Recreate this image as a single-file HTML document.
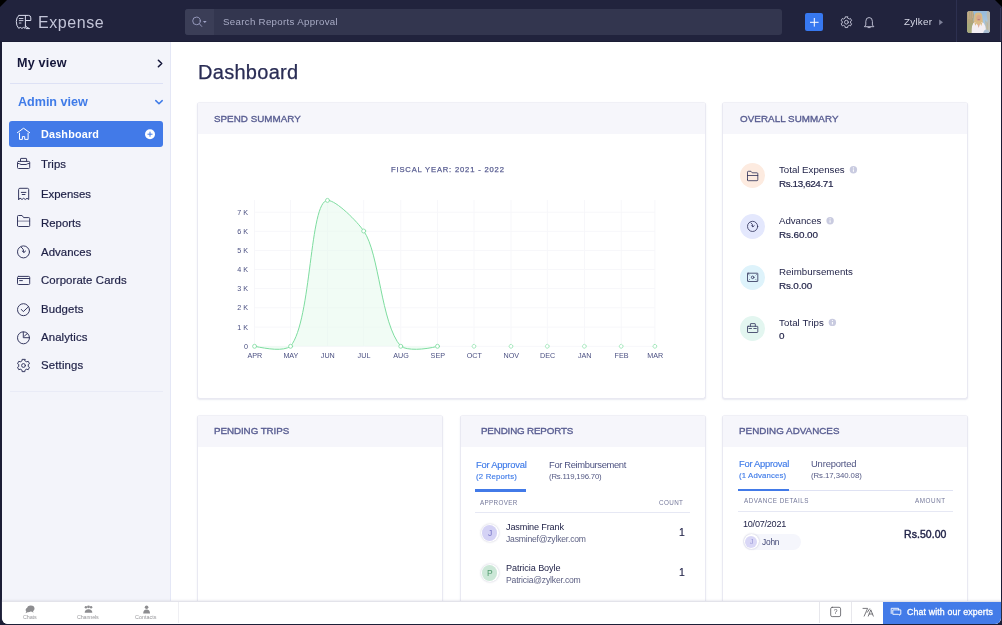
<!DOCTYPE html>
<html>
<head>
<meta charset="utf-8">
<title>Expense</title>
<style>
*{box-sizing:border-box;margin:0;padding:0}
html,body{width:1002px;height:625px;overflow:hidden;background:#1b1d35}
body{font-family:"Liberation Sans",sans-serif;color:#21233d;position:relative}
.a{position:absolute}
.t{position:absolute;white-space:nowrap;line-height:1;will-change:transform}
.card{position:absolute;background:#fff;border:1px solid #e9e9f2;border-top-color:#f0f0f6;border-radius:3px;box-shadow:0 1px 1.5px rgba(190,192,215,.35);overflow:hidden}
.card i{position:absolute;left:0;top:0;right:0;height:30.6px;background:#f6f6fb;display:block}
#gfx{position:absolute;left:0;top:0;will-change:transform}

</style>
</head>
<body>
<div class="a" style="left:0;top:0;width:1002px;height:41.4px;background:#21233d"></div>
<div class="a" style="left:2.2px;top:41.5px;width:998.7px;height:582.1px;background:#fff;border-radius:0 0 6px 6px;overflow:hidden">
</div>
<div class="a" style="left:2.2px;top:41.5px;width:169.2px;height:560.5px;background:#f3f4fa;border-right:1px solid #e4e7f6"></div>
<div class="a" style="left:9.5px;top:83px;width:153.3px;height:1px;background:#dde1f5"></div>
<div class="a" style="left:9.5px;top:391px;width:153.3px;height:1px;background:#e9ebf6"></div>
<div class="a" style="left:9.3px;top:121.4px;width:153.5px;height:25.4px;background:#427ae8;border-radius:3px"></div>
<div class="card" style="left:197px;top:102.4px;width:509px;height:296.3px"><i></i></div>
<div class="card" style="left:721.7px;top:102.4px;width:246.6px;height:296.3px"><i></i></div>
<div class="card" style="left:197px;top:415.3px;width:245.6px;height:200px"><i></i></div>
<div class="card" style="left:459.5px;top:415.3px;width:246.5px;height:200px"><i></i></div>
<div class="card" style="left:721.7px;top:415.3px;width:246.6px;height:200px"><i></i></div>
<div class="a" style="left:740.1px;top:163.3px;width:25.2px;height:25.2px;border-radius:50%;background:#fdebe0"></div>
<div class="a" style="left:740.1px;top:213.9px;width:25.2px;height:25.2px;border-radius:50%;background:#e4e8fd"></div>
<div class="a" style="left:740.1px;top:264.8px;width:25.2px;height:25.2px;border-radius:50%;background:#def3fb"></div>
<div class="a" style="left:740.1px;top:315.7px;width:25.2px;height:25.2px;border-radius:50%;background:#e3f6f0"></div>
<div class="a" style="left:475.3px;top:489.4px;width:51px;height:2.4px;background:#427ae8"></div>
<div class="a" style="left:475.3px;top:511.8px;width:214.5px;height:1px;background:#e6e8f4"></div>
<div class="a" style="left:738px;top:490px;width:214.7px;height:1px;background:#dfe2f3"></div>
<div class="a" style="left:738px;top:488.6px;width:51px;height:2.4px;background:#427ae8"></div>
<div class="a" style="left:738px;top:511px;width:214.7px;height:1px;background:#e6e8f4"></div>
<div class="a" style="left:480.6px;top:523.8px;width:18.2px;height:18.2px;border-radius:50%;background:#fff;box-shadow:0 0 2px rgba(120,120,160,.45)"></div>
<div class="a" style="left:481.9px;top:525.1px;width:15.6px;height:15.6px;border-radius:50%;background:#d4d2f5"></div>
<div class="a" style="left:480.6px;top:563.9px;width:18.2px;height:18.2px;border-radius:50%;background:#fff;box-shadow:0 0 2px rgba(120,120,160,.45)"></div>
<div class="a" style="left:481.9px;top:565.2px;width:15.6px;height:15.6px;border-radius:50%;background:#cbe7d7"></div>
<div class="a" style="left:742.6px;top:533.8px;width:58.5px;height:16px;border-radius:8px;background:#f5f6fc"></div>
<div class="a" style="left:743.6px;top:534.3px;width:15.0px;height:15.0px;border-radius:50%;background:#fff;box-shadow:0 0 2px rgba(120,120,160,.45)"></div>
<div class="a" style="left:744.8px;top:535.5px;width:12.6px;height:12.6px;border-radius:50%;background:#d9d7f6"></div>
<div class="a" style="left:2.2px;top:601.4px;width:998.7px;height:22.2px;background:#fff;border-top:1px solid #e3e3ea;border-radius:0 0 6px 6px;box-shadow:0 -1px 2px rgba(200,200,215,.35)"></div>
<div class="a" style="left:819.3px;top:602px;width:1px;height:21px;background:#e7e7ec"></div>
<div class="a" style="left:177.600px;top:602px;width:1px;height:21px;background:#efeff3"></div>
<div class="a" style="left:851.3px;top:602px;width:1px;height:21px;background:#e7e7ec"></div>
<div class="a" style="left:882.8px;top:601.8px;width:118.1px;height:21.8px;background:#437be8;border-radius:0 0 6px 0"></div>
<div class="a" style="left:185px;top:9px;width:597px;height:25.8px;background:#33364f;border-radius:3px"></div>
<div class="a" style="left:185px;top:9px;width:29.2px;height:25.8px;background:#3b3e57;border-radius:3px 0 0 3px"></div>
<div class="a" style="left:805.4px;top:12.8px;width:17.8px;height:18.2px;background:#3778f0;border-radius:2px"></div>
<div class="a" style="left:956px;top:0;width:1px;height:41.500px;background:#2d3050"></div>
<div class="a" style="left:1000.2px;top:8px;width:.8px;height:33.4px;background:#34375a"></div>
<div class="a" style="left:0;top:0;width:0;height:0;border-top:7.3px solid #000;border-right:7.3px solid transparent"></div>
<div class="a" style="right:0;top:0;width:0;height:0;border-top:7px solid #000;border-left:7px solid transparent"></div>
<svg id="gfx" width="1002" height="625" viewBox="0 0 1002 625" fill="none" stroke-linecap="round" stroke-linejoin="round">
<g stroke="#d9dbec" stroke-width="1">
<path d="M18.900 15.400H28.500Q30.800 15.400 30.800 17.800V20.500H25.600"/>
<path d="M25.400 15.800V25.200Q25.800 27.600 29.600 28.600H26.400"/>
<path d="M18.900 15.400Q16.300 17.400 16.300 21.600Q16.300 25.800 18.700 28.300L20.300 27.400L21.900 28.400L23.500 27.400L25.200 28.300L25.400 25.200"/>
<path d="M19.300 18.500H23M19.300 20.600H23M19.300 23H21" stroke-width=".9"/>
</g>
<circle cx="196.500" cy="20.900" r="3.800" stroke="#9fa3c6" stroke-width=".9"/>
<path d="M199.300 23.700L201.700 26.400" stroke="#9fa3c6" stroke-width=".9"/>
<path d="M202.900 20.900H206.700L204.800 23.100Z" fill="#9fa3c6" stroke="none"/>
<path d="M810 22.300H818.600M814.300 18V26.600" stroke="#fff" stroke-width="1" stroke-linecap="butt"/>
<path d="M847.64 16.84L845.16 16.84L845.14 18.09L843.47 19.06L842.38 18.45L841.14 20.59L842.21 21.23L842.21 23.17L841.14 23.81L842.38 25.95L843.47 25.34L845.14 26.31L845.16 27.56L847.64 27.56L847.66 26.31L849.33 25.34L850.42 25.95L851.66 23.81L850.59 23.17L850.59 21.23L851.66 20.59L850.42 18.45L849.33 19.06L847.66 18.09Z" stroke="#c9cbdc" stroke-width=".9"/>
<circle cx="846.400" cy="22.200" r="1.900" stroke="#c9cbdc" stroke-width=".9"/>
<path d="M864.600 26.400L865.800 25V21.400Q865.800 17.500 869.100 17.500Q872.400 17.500 872.400 21.400V25L873.600 26.400Z" stroke="#c9cbdc" stroke-width=".9"/>
<path d="M868 27.600H870.200" stroke="#c9cbdc" stroke-width=".9"/>
<path d="M939.200 19.400L943 22.300L939.200 25.200Z" fill="#7e8199" stroke="none"/>
<path d="M158.400 60.300L161.700 63.500L158.400 66.700" stroke="#14163a" stroke-width="1.600"/>
<path d="M155.800 100.600L159 103.700L162.200 100.600" stroke="#3f7be8" stroke-width="1.500"/>
<circle cx="150" cy="134.200" r="5" fill="#fff" stroke="none"/>
<path d="M147.500 134.200H152.500M150 131.700V136.700" stroke="#427ae8" stroke-width="1" stroke-linecap="butt"/>
<path d="M17.400 132.700L23.300 128.400H23.800L29.700 132.700M19.500 133.200V139.400H22.400V136.600H24.700V139.400H28.100V133.200" stroke="#fff" stroke-width="1"/>
<g stroke="#363960" stroke-width="1">
<rect x="17.500" y="161.400" width="12.200" height="7.100" rx="1"/>
<path d="M20.500 161.400V158.900Q20.500 158.400 21 158.400H26.100Q26.600 158.400 26.600 158.900V161.400"/>
<path d="M17.500 163.300Q20 163.600 21 164.500H26.200Q27.200 163.600 29.700 163.300"/>
<path d="M18.600 199.500V189.600Q18.600 188.300 19.900 188.300H27.400Q28.700 188.300 28.700 189.600V199.500L27 198.300L25.300 199.500L23.650 198.300L22 199.500L20.300 198.300Z"/>
<path d="M21.300 192.400H25.900M22.200 194.500H25"/>
<path d="M17.500 225.600V216.400Q17.500 215.500 18.400 215.500H22.100L23.600 217.600H28.800Q29.700 217.600 29.700 218.500V225.600Q29.700 226.500 28.800 226.500H18.400Q17.500 226.500 17.500 225.600Z"/>
<path d="M17.500 221.100H29.700" stroke-opacity=".6"/>
<circle cx="23.500" cy="251.900" r="6"/>
<path d="M21.400 247.200Q23.800 248.600 23.900 252.200M22.200 251L23.900 252.500L25.600 251"/>
<rect x="17.500" y="276.400" width="12.200" height="8.100" rx="1"/>
<path d="M17.500 278.500H29.700M19.600 280.600H22.400"/>
<circle cx="23.500" cy="309.700" r="6"/>
<path d="M21.300 309.400L23.300 311.600L28.700 306.500"/>
<circle cx="23.500" cy="337.800" r="6"/>
<path d="M23.300 332V337.700H29.300M24.500 336L27.500 333.400"/>
<path d="M24.92 359.36L22.08 359.36L22.07 360.81L20.16 361.92L18.89 361.20L17.48 363.66L18.73 364.40L18.73 366.60L17.48 367.34L18.89 369.80L20.16 369.08L22.07 370.19L22.08 371.64L24.92 371.64L24.93 370.19L26.84 369.08L28.11 369.80L29.52 367.34L28.27 366.60L28.27 364.40L29.52 363.66L28.11 361.20L26.84 361.92L24.93 360.81Z"/>
<circle cx="23.500" cy="365.500" r="1.900"/>
</g>
<g stroke="#f7f7fa" stroke-width="1" stroke-linecap="butt">
<path d="M254.600 212.2H655M254.600 231.3H655M254.600 250.4H655M254.600 269.5H655M254.600 288.6H655M254.600 307.8H655M254.600 327.1H655M254.600 346.3H655"/>
<path d="M254.6 200V346.300M290.6 200V346.300M327.5 200V346.300M363.7 200V346.300M400.8 200V346.300M437.5 200V346.300M474.0 200V346.300M511.0 200V346.300M547.3 200V346.300M584.4 200V346.300M621.2 200V346.300M654.9 200V346.300"/>
</g>
<path d="M254.6 346.3C268 349 283 351.5 290.6 346.3C311.8 319.8 309.4 200.9 327.5 200.4C336 200 357.7 222 363.7 231C379.5 253.1 380.8 323.6 400.8 346.3C407 350.6 424 350 437.5 346.3Z" fill="#e6f9ec" fill-opacity=".55" stroke="none"/>
<path d="M254.6 346.3C268 349 283 351.5 290.6 346.3C311.8 319.8 309.4 200.9 327.5 200.4C336 200 357.7 222 363.7 231C379.5 253.1 380.8 323.6 400.8 346.3C407 350.6 424 350 437.5 346.3" stroke="#7ddc9f" stroke-width="1"/>
<g fill="#fff" stroke="#7ddc9f" stroke-width=".8">
<circle cx="254.6" cy="346.3" r="2"/>
<circle cx="290.6" cy="346.3" r="2"/>
<circle cx="327.5" cy="200.4" r="2"/>
<circle cx="363.7" cy="231.0" r="2"/>
<circle cx="400.8" cy="346.3" r="2"/>
<circle cx="437.5" cy="346.3" r="2"/>
</g><g fill="#fff" stroke="#86dfa6" stroke-width=".8" stroke-dasharray="1.2 1">
<circle cx="474.0" cy="346.3" r="1.900"/>
<circle cx="511.0" cy="346.3" r="1.900"/>
<circle cx="547.3" cy="346.3" r="1.900"/>
<circle cx="584.4" cy="346.3" r="1.900"/>
<circle cx="621.2" cy="346.3" r="1.900"/>
<circle cx="654.9" cy="346.3" r="1.900"/>
</g>
<g font-family="Liberation Sans, sans-serif" font-size="7.200" fill="#4b5082" stroke="none" text-anchor="end">
<text x="248.100" y="214.8">7 K</text>
<text x="248.100" y="233.9">6 K</text>
<text x="248.100" y="253.0">5 K</text>
<text x="248.100" y="272.1">4 K</text>
<text x="248.100" y="291.2">3 K</text>
<text x="248.100" y="310.4">2 K</text>
<text x="248.100" y="329.7">1 K</text>
<text x="248.100" y="348.9">0</text>
</g><g font-family="Liberation Sans, sans-serif" font-size="7.200" fill="#4b5082" stroke="none" text-anchor="middle">
<text x="254.9" y="358.300">APR</text>
<text x="290.9" y="358.300">MAY</text>
<text x="327.8" y="358.300">JUN</text>
<text x="364.0" y="358.300">JUL</text>
<text x="401.1" y="358.300">AUG</text>
<text x="437.8" y="358.300">SEP</text>
<text x="474.3" y="358.300">OCT</text>
<text x="511.3" y="358.300">NOV</text>
<text x="547.6" y="358.300">DEC</text>
<text x="584.7" y="358.300">JAN</text>
<text x="621.5" y="358.300">FEB</text>
<text x="655.2" y="358.300">MAR</text>
</g>
<g stroke="#2d3058" stroke-width=".8">
<path d="M747.500 179.900V172.100Q747.500 171.300 748.300 171.300H751L752.200 172.800H757Q757.800 172.800 757.800 173.600V179.900Q757.800 180.700 757 180.700H748.300Q747.500 180.700 747.500 179.900ZM747.500 175.500H757.800"/>
<circle cx="752.600" cy="226.400" r="5.100"/>
<path d="M751 222.800Q752.800 223.800 752.900 226.600M751.600 225.700L752.900 226.900L754.200 225.700"/>
<rect x="747.500" y="273.200" width="10.300" height="8.300" rx=".5"/>
<circle cx="752.650" cy="277.350" r="1.300"/>
<path d="M749 274.700L749.300 275M756.300 274.700L756 275M749 280L749.300 279.700M756.300 280L756 279.700" stroke-width=".8"/>
<rect x="747.500" y="326.300" width="10.300" height="6.200" rx=".6"/>
<path d="M750.400 326.300V324Q750.400 323.600 750.800 323.600H754.900Q755.300 323.600 755.300 324V326.300M749 328.500H751.500M753.800 328.500H756.300"/>
</g>
<circle cx="853.4" cy="169.8" r="3.700" fill="#c9cbe0" stroke="none"/>
<path d="M853.4 169.4V171.8" stroke="#fff" stroke-width="1" stroke-linecap="butt"/><circle cx="853.4" cy="167.9" r=".6" fill="#fff" stroke="none"/>
<circle cx="830.1" cy="220.7" r="3.700" fill="#c9cbe0" stroke="none"/>
<path d="M830.1 220.29999999999998V222.7" stroke="#fff" stroke-width="1" stroke-linecap="butt"/><circle cx="830.1" cy="218.79999999999998" r=".6" fill="#fff" stroke="none"/>
<circle cx="832.4" cy="322.4" r="3.700" fill="#c9cbe0" stroke="none"/>
<path d="M832.4 322.0V324.4" stroke="#fff" stroke-width="1" stroke-linecap="butt"/><circle cx="832.4" cy="320.5" r=".6" fill="#fff" stroke="none"/>
<g fill="#8d8d90" stroke="none">
<ellipse cx="30.800" cy="608.600" rx="3.700" ry="3"/><ellipse cx="28.200" cy="610" rx="2.600" ry="2.200"/><path d="M26.300 611.200L25.600 613.300L28 612Z"/><path d="M32.500 610.800L33.800 612.600L31 611.800Z"/>
<circle cx="85.900" cy="607.200" r="1.200"/><circle cx="91.100" cy="607.200" r="1.200"/><circle cx="88.500" cy="606.800" r="1.400"/><path d="M84.700 612.800Q84.700 609.300 88.500 609.300Q92.300 609.300 92.300 612.800Z"/>
<circle cx="146.600" cy="607.300" r="1.800"/><path d="M143.200 613.400Q143.200 609.600 146.600 609.600Q150 609.600 150 613.400Z"/>
</g>
<rect x="830.700" y="607.300" width="9.900" height="9.300" rx="1.500" stroke="#55555c" stroke-width=".8"/>
<text x="835.700" y="614.400" font-family="Liberation Sans, sans-serif" font-size="6.800" fill="#55555c" stroke="none" text-anchor="middle">?</text>
<path d="M863 608.400H867.600L864.200 616.100M867.300 612.300L869.600 608.900M868.300 616.100L870.800 609.800L873.300 616.100M869.200 614H872.400" stroke="#55555c" stroke-width=".8"/>
<path d="M891.200 613.500V608.300H898.600V609.900M893.200 609.900H900.800V614.300H899.600V615.300L898.300 614.300H893.200Z" stroke="#fff" stroke-width=".9"/>
</svg>
<svg class="a" style="left:967px;top:10.900px" width="23" height="22" viewBox="0 0 23 22"><defs><clipPath id="avc"><rect x="0" y="0" width="23" height="22" rx="2.800"/></clipPath><filter id="avb" x="-10%" y="-10%" width="120%" height="120%"><feGaussianBlur stdDeviation=".55"/></filter><linearGradient id="sky" x1="0" y1="0" x2="0" y2="1"><stop offset="0" stop-color="#93b9dc"/><stop offset="1" stop-color="#bcd3e4"/></linearGradient></defs><g clip-path="url(#avc)"><rect width="23" height="22" fill="#a5b4b4"/><g filter="url(#avb)">
<rect x="-2" y="-2" width="27" height="26" fill="url(#sky)"/>
<path d="M-2 -2H5.500L7 4L6.500 9L7.500 14L5 24H-2Z" fill="#b1a47c"/>
<path d="M-2 13L6 12L5 24H-2Z" fill="#a7a97b"/>
<path d="M1 -1L2 8M3.500 0L4 9M5.500 1L5.500 7" stroke="#c9a98e" stroke-width=".8" fill="none"/>
<path d="M19.500 3L20.500 9L19.500 16L21 24H25V-2H21Z" fill="#c9b596" fill-opacity=".6"/>
<path d="M18 9L18.500 17L17 24H21V12Z" fill="#bfb08c" fill-opacity=".55"/>
<path d="M7.300 7Q7 1.600 11.400 1.600Q15.600 1.600 15.400 7L16.200 14.500H6.600Z" fill="#dbbb86"/>
<ellipse cx="11.700" cy="7" rx="2.300" ry="3.100" fill="#d9a78d"/>
<path d="M10.700 8.600H12.800" stroke="#a86a6a" stroke-width=".7"/>
<path d="M4.600 24Q4.300 11.500 8 11.300L11.300 14.500L14.600 11.300Q19 11.500 19.300 24Z" fill="#f3eef3"/>
<path d="M10.500 13L11.600 17L13 13Z" fill="#dcae95"/>
<path d="M7.300 11.500L8.300 14.800L9.800 12.200ZM15.300 11.500L14.300 15L13 12.200Z" fill="#dbbb86"/>
<path d="M15.800 24Q16.500 18.600 19.500 18.600Q22.300 18.600 22.500 24Z" fill="#a9bdd2"/>
</g></g></svg>
<div class="t" id="t0" style="left:38.40px;top:14.80px;font-size:16px;color:#c3c5d8;letter-spacing:0.562px;">Expense</div>
<div class="t" id="t1" style="left:223.20px;top:16.95px;font-size:9.7px;color:#a9acc6;letter-spacing:0.317px;">Search Reports Approval</div>
<div class="t" id="t2" style="left:903.50px;top:16.90px;font-size:9.8px;color:#d6d8e6;letter-spacing:0.271px;">Zylker</div>
<div class="t" id="t3" style="left:17.40px;top:57.00px;font-size:12.6px;color:#14163a;letter-spacing:0.200px;font-weight:bold;">My view</div>
<div class="t" id="t4" style="left:17.90px;top:96.00px;font-size:12.6px;color:#3f7be8;letter-spacing:-0.028px;font-weight:bold;">Admin view</div>
<div class="t" id="t5" style="left:40.60px;top:128.90px;font-size:10.8px;color:#ffffff;letter-spacing:0.188px;font-weight:bold;">Dashboard</div>
<div class="t" id="t6" style="left:40.70px;top:158.60px;font-size:11.4px;color:#1d1f45;letter-spacing:0.022px;-webkit-text-stroke:0.2px #1d1f45;">Trips</div>
<div class="t" id="t7" style="left:40.70px;top:188.60px;font-size:11.4px;color:#1d1f45;letter-spacing:-0.004px;-webkit-text-stroke:0.2px #1d1f45;">Expenses</div>
<div class="t" id="t8" style="left:40.70px;top:217.60px;font-size:11.4px;color:#1d1f45;letter-spacing:0.016px;-webkit-text-stroke:0.2px #1d1f45;">Reports</div>
<div class="t" id="t9" style="left:40.70px;top:246.60px;font-size:11.4px;color:#1d1f45;letter-spacing:0.059px;-webkit-text-stroke:0.2px #1d1f45;">Advances</div>
<div class="t" id="t10" style="left:40.70px;top:274.60px;font-size:11.4px;color:#1d1f45;letter-spacing:0.100px;-webkit-text-stroke:0.2px #1d1f45;">Corporate Cards</div>
<div class="t" id="t11" style="left:40.70px;top:303.60px;font-size:11.4px;color:#1d1f45;letter-spacing:0.098px;-webkit-text-stroke:0.2px #1d1f45;">Budgets</div>
<div class="t" id="t12" style="left:40.70px;top:331.60px;font-size:11.4px;color:#1d1f45;letter-spacing:0.112px;-webkit-text-stroke:0.2px #1d1f45;">Analytics</div>
<div class="t" id="t13" style="left:40.70px;top:359.60px;font-size:11.4px;color:#1d1f45;letter-spacing:0.166px;-webkit-text-stroke:0.2px #1d1f45;">Settings</div>
<div class="t" id="t14" style="left:198.10px;top:62.30px;font-size:20px;color:#2a2d55;letter-spacing:0.284px;-webkit-text-stroke:0.25px #2a2d55;">Dashboard</div>
<div class="t" id="t15" style="left:214.10px;top:113.90px;font-size:9.8px;color:#585d91;letter-spacing:0.025px;-webkit-text-stroke:0.35px #585d91;">SPEND SUMMARY</div>
<div class="t" id="t16" style="left:739.50px;top:113.90px;font-size:9.8px;color:#585d91;letter-spacing:0.070px;-webkit-text-stroke:0.35px #585d91;">OVERALL SUMMARY</div>
<div class="t" id="t17" style="left:213.90px;top:425.90px;font-size:9.8px;color:#585d91;letter-spacing:-0.064px;-webkit-text-stroke:0.35px #585d91;">PENDING TRIPS</div>
<div class="t" id="t18" style="left:480.60px;top:425.90px;font-size:9.8px;color:#585d91;letter-spacing:-0.163px;-webkit-text-stroke:0.35px #585d91;">PENDING REPORTS</div>
<div class="t" id="t19" style="left:739.30px;top:425.90px;font-size:9.8px;color:#585d91;letter-spacing:0.031px;-webkit-text-stroke:0.35px #585d91;">PENDING ADVANCES</div>
<div class="t" id="t20" style="left:390.90px;top:166.00px;font-size:7.6px;color:#585d91;letter-spacing:0.833px;-webkit-text-stroke:0.25px #585d91;">FISCAL YEAR: 2021 - 2022</div>
<div class="t" id="t21" style="left:778.90px;top:164.95px;font-size:9.7px;color:#23254a;letter-spacing:-0.007px;">Total Expenses</div>
<div class="t" id="t22" style="left:778.90px;top:178.85px;font-size:9.9px;color:#23254a;letter-spacing:-0.396px;-webkit-text-stroke:0.2px #23254a;">Rs.13,624.71</div>
<div class="t" id="t23" style="left:778.90px;top:215.95px;font-size:9.7px;color:#23254a;letter-spacing:-0.031px;">Advances</div>
<div class="t" id="t24" style="left:778.90px;top:229.85px;font-size:9.9px;color:#23254a;letter-spacing:-0.079px;-webkit-text-stroke:0.2px #23254a;">Rs.60.00</div>
<div class="t" id="t25" style="left:778.60px;top:266.95px;font-size:9.7px;color:#23254a;letter-spacing:0.055px;">Reimbursements</div>
<div class="t" id="t26" style="left:778.60px;top:280.85px;font-size:9.9px;color:#23254a;letter-spacing:-0.150px;-webkit-text-stroke:0.2px #23254a;">Rs.0.00</div>
<div class="t" id="t27" style="left:778.90px;top:317.95px;font-size:9.7px;color:#23254a;letter-spacing:0.077px;">Total Trips</div>
<div class="t" id="t28" style="left:779.20px;top:330.85px;font-size:9.9px;color:#23254a;letter-spacing:-0.500px;-webkit-text-stroke:0.2px #23254a;">0</div>
<div class="t" id="t29" style="left:475.60px;top:460.10px;font-size:9.4px;color:#3f7be8;letter-spacing:-0.213px;-webkit-text-stroke:0.15px #3f7be8;">For Approval</div>
<div class="t" id="t30" style="left:475.60px;top:472.90px;font-size:7.8px;color:#3f7be8;letter-spacing:0.182px;-webkit-text-stroke:0.15px #3f7be8;">(2 Reports)</div>
<div class="t" id="t31" style="left:548.60px;top:460.10px;font-size:9.4px;color:#4c5180;letter-spacing:-0.344px;">For Reimbursement</div>
<div class="t" id="t32" style="left:548.60px;top:472.90px;font-size:7.8px;color:#555a85;letter-spacing:-0.190px;">(Rs.119,196.70)</div>
<div class="t" id="t33" style="left:480.40px;top:499.65px;font-size:6.3px;color:#74789a;letter-spacing:0.325px;">APPROVER</div>
<div class="t" id="t34" style="left:658.50px;top:499.65px;font-size:6.3px;color:#74789a;letter-spacing:0.382px;">COUNT</div>
<div class="t" id="t35" style="left:505.80px;top:522.75px;font-size:9.1px;color:#23254a;letter-spacing:-0.142px;">Jasmine Frank</div>
<div class="t" id="t36" style="left:505.80px;top:535.00px;font-size:8.6px;color:#5b5f82;letter-spacing:-0.205px;">Jasminef@zylker.com</div>
<div class="t" id="t37" style="left:679.30px;top:527.60px;font-size:10.4px;color:#23254a;-webkit-text-stroke:0.15px #23254a;">1</div>
<div class="t" id="t38" style="left:505.80px;top:563.75px;font-size:9.1px;color:#23254a;letter-spacing:-0.079px;">Patricia Boyle</div>
<div class="t" id="t39" style="left:505.80px;top:576.00px;font-size:8.6px;color:#5b5f82;letter-spacing:-0.177px;">Patricia@zylker.com</div>
<div class="t" id="t40" style="left:679.30px;top:567.60px;font-size:10.4px;color:#23254a;-webkit-text-stroke:0.15px #23254a;">1</div>
<div class="t" id="t41" style="left:487.60px;top:529.05px;font-size:8.5px;color:#7b79c9;">J</div>
<div class="t" id="t42" style="left:487.00px;top:569.05px;font-size:8.5px;color:#4f9a6d;">P</div>
<div class="t" id="t43" style="left:738.50px;top:459.10px;font-size:9.4px;color:#3f7be8;letter-spacing:-0.263px;-webkit-text-stroke:0.15px #3f7be8;">For Approval</div>
<div class="t" id="t44" style="left:738.50px;top:471.90px;font-size:7.8px;color:#3f7be8;letter-spacing:0.149px;-webkit-text-stroke:0.15px #3f7be8;">(1 Advances)</div>
<div class="t" id="t45" style="left:810.80px;top:459.10px;font-size:9.4px;color:#4c5180;letter-spacing:-0.151px;">Unreported</div>
<div class="t" id="t46" style="left:810.80px;top:471.90px;font-size:7.8px;color:#555a85;letter-spacing:-0.063px;">(Rs.17,340.08)</div>
<div class="t" id="t47" style="left:743.80px;top:497.65px;font-size:6.3px;color:#74789a;letter-spacing:0.492px;">ADVANCE DETAILS</div>
<div class="t" id="t48" style="left:915.40px;top:497.65px;font-size:6.3px;color:#74789a;letter-spacing:0.584px;">AMOUNT</div>
<div class="t" id="t49" style="left:743.30px;top:519.75px;font-size:9.1px;color:#23254a;letter-spacing:-0.252px;">10/07/2021</div>
<div class="t" id="t50" style="left:761.70px;top:538.10px;font-size:8.4px;color:#444a78;letter-spacing:-0.218px;">John</div>
<div class="t" id="t51" style="left:749.60px;top:538.30px;font-size:7px;color:#9b99d8;">J</div>
<div class="t" id="t52" style="left:904.40px;top:529.05px;font-size:10.5px;color:#23254a;letter-spacing:0.059px;-webkit-text-stroke:0.4px #23254a;">Rs.50.00</div>
<div class="t" id="t53" style="left:907.10px;top:607.90px;font-size:8.8px;color:#ffffff;letter-spacing:0.137px;-webkit-text-stroke:0.3px #ffffff;">Chat with our experts</div>
<div class="t" id="t54" style="left:22.80px;top:614.60px;font-size:5.4px;color:#97979b;letter-spacing:-0.099px;">Chats</div>
<div class="t" id="t55" style="left:77.10px;top:614.60px;font-size:5.4px;color:#97979b;letter-spacing:-0.148px;">Channels</div>
<div class="t" id="t56" style="left:135.40px;top:614.60px;font-size:5.4px;color:#97979b;letter-spacing:0.040px;">Contacts</div>
</body>
</html>
